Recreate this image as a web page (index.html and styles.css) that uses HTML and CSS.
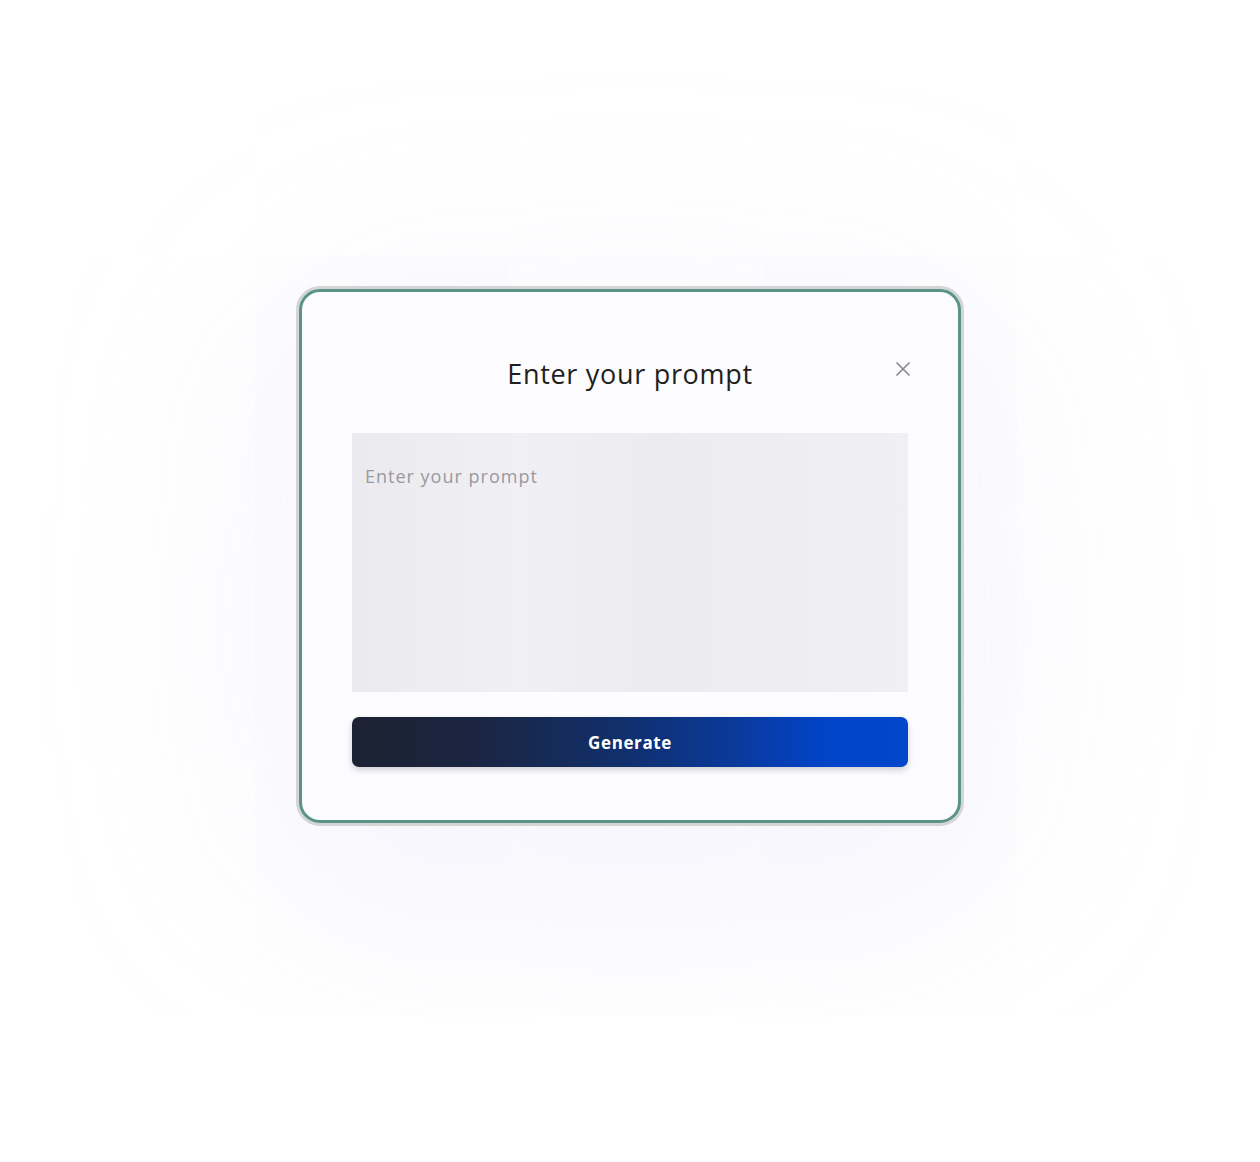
FILE: index.html
```html
<!DOCTYPE html>
<html lang="en">
<head>
<meta charset="utf-8">
<title>Enter your prompt</title>
<link rel="stylesheet" href="styles.css">
</head>
<body>
<div class="stage">
  <div class="modal">
    <div class="modal-inner">
      <div class="header">
        <h2 class="title">Enter your prompt</h2>
        <button class="close" aria-label="Close">
          <svg viewBox="0 0 16 16" width="16" height="16"><path d="M2 2 L14 14 M14 2 L2 14" stroke="#8a8a8e" stroke-width="1.7" stroke-linecap="round" fill="none"/></svg>
        </button>
      </div>
      <textarea class="prompt" placeholder="Enter your prompt"></textarea>
      <button class="generate">Generate</button>
    </div>
  </div>
</div>
</body>
</html>
```
FILE: styles.css
```css
* { box-sizing: border-box; }
html, body { margin: 0; padding: 0; }
body {
  background: #ffffff;
  font-family: "Open Sans", "Noto Sans", sans-serif;
  width: 1260px;
  height: 1162px;
  overflow: hidden;
}
.stage {
  padding-top: 286px;
  padding-left: 296px;
}
.modal {
  width: 668px;
  height: 540px;
  border: 3px solid #d4d6d5;
  border-radius: 24px;
  box-shadow: 0 40px 240px rgba(195, 195, 240, 0.28);
  background: #d4d6d5;
}
.modal-inner {
  height: 100%;
  border: 3px solid #5b9486;
  border-radius: 21px;
  background: linear-gradient(90deg, #fcfbfe 0%, #fdfcfe 50%, #fcfbfd 100%);
  padding: 64px 50px 0 50px;
  display: flex;
  flex-direction: column;
}
.header {
  position: relative;
  height: 36px;
  display: flex;
  justify-content: center;
  align-items: center;
}
.title {
  margin: 0;
  font-size: 27px;
  font-weight: 500;
  color: #1f1f22;
  line-height: 36px;
  letter-spacing: 0.7px;
}
.close {
  position: absolute;
  right: -3px;
  top: 5px;
  width: 16px;
  height: 16px;
  padding: 0;
  border: 0;
  background: none;
  display: flex;
}
.prompt {
  margin-top: 41px;
  width: 556px;
  height: 259px;
  border: 0;
  border-radius: 2px;
  background: linear-gradient(90deg, #ebeaee 0%, #f0eff3 30%, #ececef 55%, #f0eff1 100%);
  padding: 31px 13px;
  resize: none;
  font-family: inherit;
  font-size: 18px;
  letter-spacing: 1px;
  color: #333;
  outline: none;
}
.prompt::placeholder { color: #9a999e; }
.generate {
  margin-top: 25px;
  width: 556px;
  height: 50px;
  border: 0;
  border-radius: 7px;
  background: linear-gradient(90deg, #1c2232 0%, #1b2541 22%, #10306e 50%, #0a3a9f 70%, #0044c8 85%, #0047cc 100%);
  color: #ffffff;
  font-family: inherit;
  font-size: 17px;
  font-weight: 700;
  letter-spacing: 0.6px;
  box-shadow: 0 3px 6px rgba(0, 0, 0, 0.18);
}
```
